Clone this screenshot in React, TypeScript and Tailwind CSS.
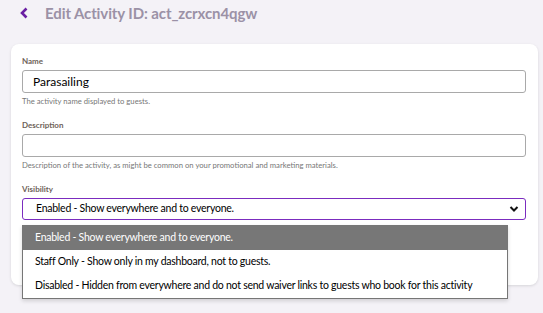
import React from 'react';

const options = [
  'Enabled - Show everywhere and to everyone.',
  'Staff Only - Show only in my dashboard, not to guests.',
  'Disabled - Hidden from everywhere and do not send waiver links to guests who book for this activity',
];

function Field({ label, value, help }: { label: string; value: string; help: string }) {
  return (
    <div className="flex flex-col">
      <label className="text-[8px] leading-[12px] font-bold text-[#6e6258] mb-[3px]">{label}</label>
      <div className="h-[23px] border border-[#a9a9a9] rounded-[3px] bg-white flex items-center px-[10px] text-[12px] text-black">
        {value}
      </div>
      <p className="text-[7.7px] leading-[10px] text-[#777] mt-[3px] whitespace-nowrap">{help}</p>
    </div>
  );
}

export default function App() {
  return (
    <div className="w-[543px] h-[313px] bg-[#f4f2f7] pl-[11px] pr-[5px] overflow-hidden" style={{ fontFamily: 'Lato, "Open Sans", sans-serif' }}>
      <div className="flex items-center h-[26px]">
        <svg width="10" height="12" viewBox="0 0 10 12" className="ml-[8px]">
          <path d="M7.5 1.5 L3 6 L7.5 10.5" fill="none" stroke="#6a1fa3" strokeWidth="2.6" />
        </svg>
        <h1 className="ml-[16px] text-[15px] font-bold tracking-[-0.1px] text-[#9b91a6]">Edit Activity ID: act_zcrxcn4qgw</h1>
      </div>

      <div className="mt-[18px] bg-white rounded-[8px] shadow-[0_1px_3px_rgba(0,0,0,0.12)] pt-[11px] pl-[11px] pr-[12px] h-[241px] flex flex-col gap-[13px] relative">
        <Field label="Name" value="Parasailing" help="The activity name displayed to guests." />
        <Field label="Description" value="" help="Description of the activity, as might be common on your promotional and marketing materials." />

        <div className="flex flex-col relative">
          <label className="text-[8px] leading-[12px] font-bold text-[#6e6258] mb-[3px]">Visibility</label>
          <div className="h-[22px] border border-[#7b2cbf] rounded-[3px] bg-white flex items-center justify-between pl-[13px] pr-[6px] text-[10.5px] tracking-[-0.25px] text-black whitespace-nowrap">
            <span>{options[0]}</span>
            <svg width="10" height="8" viewBox="0 0 10 8">
              <path d="M1.5 2 L5 5.5 L8.5 2" fill="none" stroke="#111" strokeWidth="2" />
            </svg>
          </div>

          <ul className="absolute left-0 top-[42px] w-[486px] bg-white border border-[#767676] shadow-[0_2px_4px_rgba(0,0,0,0.15)] text-[10.5px] tracking-[-0.25px] whitespace-nowrap">
            {options.map((o, i) => (
              <li
                key={o}
                className={
                  i === 0
                    ? 'h-[24px] flex items-center pl-[12px] bg-[#777777] text-white'
                    : 'h-[24px] flex items-center pl-[12px] text-black'
                }
              >
                {o}
              </li>
            ))}
          </ul>
        </div>
      </div>
    </div>
  );
}
